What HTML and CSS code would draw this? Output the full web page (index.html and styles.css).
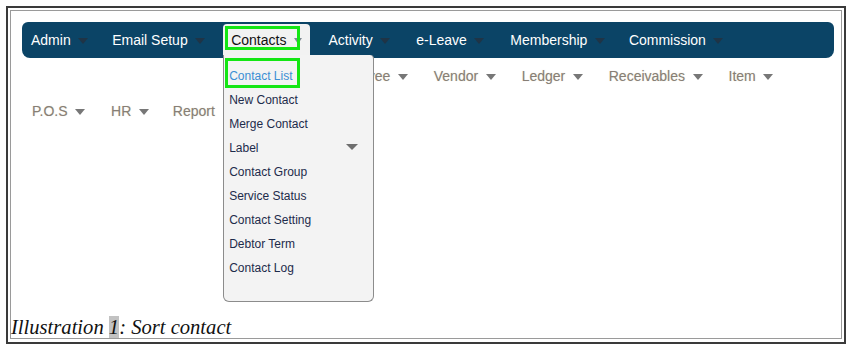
FILE: index.html
```html
<!DOCTYPE html>
<html>
<head>
<meta charset="utf-8">
<link rel="stylesheet" href="styles.css">
</head>
<body>
<div class="frame">
  <div class="inner">
    <nav class="navbar">
      <div class="item first"><span>Admin</span><i class="arr"></i></div>
      <div class="item"><span>Email Setup</span><i class="arr"></i></div>
      <div class="item active">
        <span>Contacts</span><i class="arr"></i>
        <span class="mark mark-top"></span>
        <ul class="dropdown">
          <li class="sel">Contact List<span class="mark mark-list"></span></li>
          <li>New Contact</li>
          <li>Merge Contact</li>
          <li class="sub">Label<i class="arr-sub"></i></li>
          <li>Contact Group</li>
          <li>Service Status</li>
          <li>Contact Setting</li>
          <li>Debtor Term</li>
          <li>Contact Log</li>
        </ul>
      </div>
      <div class="item"><span>Activity</span><i class="arr"></i></div>
      <div class="item"><span>e-Leave</span><i class="arr"></i></div>
      <div class="item"><span>Membership</span><i class="arr"></i></div>
      <div class="item last"><span>Commission</span><i class="arr"></i></div>
    </nav>
    <div class="row row2">
      <div class="item"><span>Employee</span><i class="arr"></i></div>
      <div class="item"><span>Vendor</span><i class="arr"></i></div>
      <div class="item"><span>Ledger</span><i class="arr"></i></div>
      <div class="item"><span>Receivables</span><i class="arr"></i></div>
      <div class="item"><span>Item</span><i class="arr"></i></div>
    </div>
    <div class="row row3">
      <div class="item first"><span>P.O.S</span><i class="arr"></i></div>
      <div class="item"><span>HR</span><i class="arr"></i></div>
      <div class="item report"><span>Report</span></div>
    </div>
    <p class="caption">Illustration <span class="num">1</span>: Sort contact</p>
  </div>
</div>
</body>
</html>
```

FILE: styles.css
```css
html, body {
  margin: 0;
  padding: 0;
  background: #ffffff;
}

.frame {
  margin: 6px 0 0 6px;
  width: 836px;
  height: 334px;
  border: 2px solid #3a3a3a;
  background: #fff;
}

.inner {
  margin: 2px 0 0 2px;
  width: 830px;
  height: 327px;
  border: 1px solid #9a9a9a;
  display: flex;
  flex-direction: column;
}

.navbar {
  margin: 11px 0 0 11px;
  width: 812px;
  height: 36px;
  background: #0b4466;
  border-radius: 6px 6px 8px 8px;
  display: flex;
  align-items: stretch;
  font-family: "Liberation Sans", Arial, sans-serif;
  font-size: 14px;
  color: #ffffff;
}

.item {
  display: flex;
  align-items: center;
  padding: 0 13px;
  white-space: nowrap;
}

.item.first {
  padding-left: 9px;
  padding-right: 11px;
}

.navbar .item.last {
  margin-left: -2px;
}

.arr {
  display: block;
  margin-left: 7.5px;
  width: 0;
  height: 0;
  border-left: 5.5px solid transparent;
  border-right: 5.5px solid transparent;
  border-top: 6px solid #1f3446;
  margin-top: 2px;
}

.item.active {
  position: relative;
  margin: 2px 5px 0 5px;
  padding: 0 8px 2px 8px;
  background: #f2f2f2;
  color: #111;
  border-radius: 4px 4px 0 0;
  z-index: 2;
}

.item.active .arr {
  border-top-color: #7f8a94;
  border-left-width: 4.5px;
  border-right-width: 4.5px;
  margin-left: 8px;
}

.mark {
  position: absolute;
  border: 3px solid #14e614;
  box-sizing: border-box;
}

.mark-top {
  left: 2px;
  top: 2px;
  width: 75px;
  height: 24px;
}

.dropdown {
  position: absolute;
  left: 0;
  top: 31px;
  width: 151px;
  height: 247px;
  margin: 0;
  padding: 9px 0 0 0;
  box-sizing: border-box;
  list-style: none;
  background: #f3f3f3;
  border: 1px solid #8c8c8c;
  border-top: none;
  border-radius: 0 4px 6px 6px;
  font-size: 12px;
  color: #1d2b4b;
}

.dropdown li {
  position: relative;
  height: 24px;
  line-height: 24px;
  padding-left: 5px;
}

.dropdown li.sel {
  color: #3b8fd4;
}

.mark-list {
  left: 1px;
  top: -6px;
  width: 75px;
  height: 30px;
}

.dropdown li.sub {
  display: flex;
  justify-content: space-between;
  align-items: center;
  padding-right: 15px;
}

.arr-sub {
  display: block;
  width: 0;
  height: 0;
  border-left: 6px solid transparent;
  border-right: 6px solid transparent;
  border-top: 6px solid #6e6e6e;
  margin-top: -2px;
}

.row {
  display: flex;
  margin-left: 11px;
  font-family: "Liberation Sans", Arial, sans-serif;
  font-size: 14px;
  color: #877f76;
  text-shadow: 0 0 1px rgba(190, 175, 140, 0.5);
}

.row .arr {
  border-top-color: #777777;
}

.row2 {
  height: 36px;
  padding-left: 293px;
}

.row3 {
  height: 34px;
}

.row3 .item.first {
  padding-left: 10px;
  padding-right: 13px;
}

.row3 .item.report {
  margin-left: -2px;
}

.caption {
  margin: auto 0 0 0;
  font-family: "Liberation Serif", "Times New Roman", serif;
  font-style: italic;
  font-size: 20.6px;
  line-height: 22px;
  color: #111111;
  padding-left: 0;
}

.caption .num {
  background: #c2c2c2;
}
```
